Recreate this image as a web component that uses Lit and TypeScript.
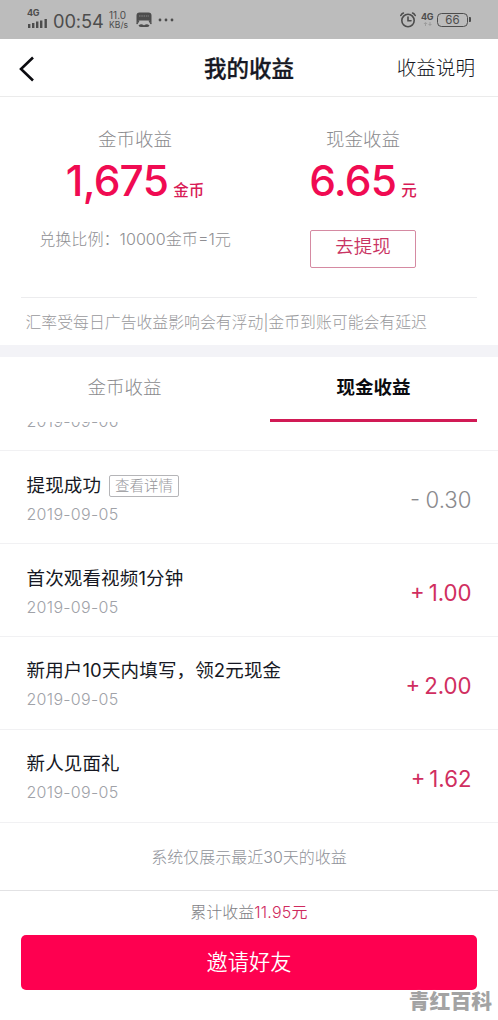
import { LitElement, html, css, nothing } from "lit";
import { customElement, property } from "lit/decorators.js";

interface Entry {
  title: string;
  date: string;
  amount: string;
  detail?: boolean;
}

const ENTRIES: Entry[] = [
  { title: "", date: "2019-09-06", amount: "" },
  { title: "提现成功", date: "2019-09-05", amount: "- 0.30", detail: true },
  { title: "首次观看视频1分钟", date: "2019-09-05", amount: "+ 1.00" },
  { title: "新用户10天内填写，领2元现金", date: "2019-09-05", amount: "+ 2.00" },
  { title: "新人见面礼", date: "2019-09-05", amount: "+ 1.62" },
];

@customElement("status-bar")
class StatusBar extends LitElement {
  static styles = css`
    :host {
      display: flex;
      box-sizing: border-box;
      height: 39px;
      flex: none;
      padding: 0 27px 0 27px;
      background: #bcbcbc;
      color: #4d4d4d;
      align-items: center;
    }
    svg { display: block; flex: none; }
    .signal { display: flex; flex-direction: column; width: 22px; gap: 2px; margin-top: -2px; }
    .gen { font-size: 9px; line-height: 8px; font-weight: 700; letter-spacing: -0.3px; }
    .time { font-size: 18.3px; line-height: 24px; margin: 2px 0 0 4px; width: 51px; letter-spacing: -0.1px; white-space: nowrap; }
    .speed { display: flex; flex-direction: column; font-size: 8.6px; line-height: 10px; margin: 1px 0 0 5px; width: 21px; white-space: nowrap; }
    .speed .val { font-size: 10px; }
    .app { margin-left: 6px; }
    .dots { margin-left: 6px; }
    .grow { flex: 1; }
    .net { display: flex; flex-direction: column; margin: 0 0 0 5px; width: 12px; gap: 1px; }
    .battery { margin: 0 0 0 4px; display: flex; align-items: center; gap: 1px; }
    .cell { box-sizing: border-box; width: 31px; height: 14px; border: 1.4px solid #4d4d4d; border-radius: 4.5px; font-size: 11.5px; line-height: 12px; text-align: center; }
    .tip { width: 2px; height: 5px; background: #4d4d4d; border-radius: 0 1px 1px 0; }
  `;
  render() {
    return html`
      <div class="signal">
        <span class="gen">4G</span>
        <svg width="22" height="9" viewBox="0 0 22 9" fill="#4d4d4d">
          <rect x="1" y="5" width="2.4" height="4" /><rect x="5" y="4" width="2.4" height="5" />
          <rect x="9" y="2.5" width="2.4" height="6.5" /><rect x="13" y="1.5" width="2.4" height="7.5" />
          <rect x="17.5" y="0" width="2.4" height="9" />
        </svg>
      </div>
      <span class="time">00:54</span>
      <div class="speed"><span class="val">11.0</span><span>KB/s</span></div>
      <svg class="app" width="16" height="16" viewBox="0 0 16 16">
        <path d="M3.500 .5H12.500Q15.500 .5 15.500 3.500V12.500L13.500 8.500H2.500L.5 12.500V3.500Q.5 .5 3.500 .5Z" fill="#4d4d4d" />
        <path d="M3 4H13" stroke="#888" stroke-width="1" stroke-dasharray="1.5 .8" />
        <path d="M1 12L3 8.500M15 12L13 8.500" stroke="#4d4d4d" stroke-width="1.2" fill="none" />
        <path d="M2.500 13.500Q5 11.500 7.500 13Q8 13.500 8.500 13Q11 11.500 13.500 13.500Q12.500 15.500 10 15H6Q3.500 15.500 2.500 13.500Z" fill="#4d4d4d" />
      </svg>
      <svg class="dots" width="16" height="4" viewBox="0 0 16 4" fill="#4d4d4d">
        <circle cx="2" cy="2" r="1.4" /><circle cx="8" cy="2" r="1.4" /><circle cx="14" cy="2" r="1.4" />
      </svg>
      <span class="grow"></span>
      <svg width="16" height="16" viewBox="0 0 16 16" fill="none" stroke="#4d4d4d" stroke-width="1.6" stroke-linecap="round">
        <circle cx="8" cy="8.500" r="6.200" /><path d="M8 5V8.800H11" /><path d="M.8 3.500Q1.800 1.600 3.400 1M15.200 3.500Q14.200 1.600 12.600 1" />
      </svg>
      <div class="net">
        <span class="gen">4G</span>
        <svg width="12" height="5" viewBox="0 0 12 5" fill="#9c9c9c"><path d="M2.500 2L4.500 0L6.500 2H5V4H4V2ZM7 2H8.500V0H9.500V2H11L9 4Z" /></svg>
      </div>
      <div class="battery"><span class="cell">66</span><span class="tip"></span></div>
    `;
  }
}

@customElement("entry-row")
class EntryRow extends LitElement {
  @property({ attribute: false }) entry!: Entry;
  static styles = css`
    :host {
      display: flex;
      box-sizing: border-box;
      height: 92.8px;
      flex: none;
      padding: 0 26.500px 0 26.500px;
      border-bottom: 1px solid #f1f1f3;
      align-items: center;
      justify-content: space-between;
    }
    .info { display: flex; flex-direction: column; padding-top: 1px; }
    .line { display: flex; align-items: center; height: 28px; gap: 8px; }
    .title { font-size: 18.5px; letter-spacing: 0.15px; color: #161823; white-space: nowrap; }
    .tag { box-sizing: border-box; height: 22px; width: 70px; border: 1px solid #b5b5b8; border-radius: 2px; font-size: 14.5px; line-height: 19px; text-align: center; color: #96969a; font-weight: 300; margin-top: 4px; }
    .date { font-size: 16px; line-height: 24px; letter-spacing: 0.3px; margin-top: 4px; color: #a0a2a8; font-weight: 300; white-space: nowrap; }
    .amount { font-size: 22.2px; line-height: 30px; margin-top: 6px; color: #d02e60; font-weight: 400; white-space: nowrap; word-spacing: -2.2px; font-feature-settings: "case"; }
    .minus { color: #8a8a8d; font-weight: 300; word-spacing: -0.8px; }
  `;
  render() {
    const e = this.entry;
    return html`
      <div class="info">
        <div class="line">
          <span class="title">${e.title}</span>
          ${e.detail ? html`<span class="tag">查看详情</span>` : nothing}
        </div>
        <span class="date">${e.date}</span>
      </div>
      <span class="amount ${e.amount.startsWith("-") ? "minus" : ""}">${e.amount}</span>
    `;
  }
}

@customElement("app-root")
class AppRoot extends LitElement {
  static styles = css`
    :host {
      display: flex;
      flex-direction: column;
      position: relative;
      width: 498px;
      height: 1020px;
      overflow: hidden;
      background: #fff;
      color: #161823;
      font-family: Inter, "Noto Sans CJK SC", sans-serif;
    }
    .header { display: grid; grid-template-columns: 1fr auto 1fr; align-items: center; box-sizing: border-box; height: 58px; flex: none; padding: 0 23px 0 19px; border-bottom: 1px solid #ebebeb; }
    .back { display: block; margin-top: 2px; }
    .heading { font-size: 22.5px; line-height: 32px; font-weight: 500; -webkit-text-stroke: 0.3px #161823; padding: 2px 0 0 4px; }
    .help { justify-self: end; font-size: 19.6px; line-height: 30px; font-weight: 300; color: #161823; margin-top: 0; }
    .summary { display: grid; grid-template-columns: 1fr 1fr; height: 201px; flex: none; margin: 0 21px; box-sizing: border-box; border-bottom: 1px solid #ececee; }
    .stat { display: flex; flex-direction: column; align-items: center; padding-top: 28px; }
    .label { font-size: 18.5px; line-height: 28px; color: #8a8a8d; font-weight: 300; }
    .value { display: flex; align-items: baseline; gap: 5px; height: 58px; line-height: 56px; color: #f00b52; font-weight: 500; font-size: 42.5px; letter-spacing: -0.8px; white-space: nowrap; }
    .unit { font-size: 15.5px; letter-spacing: 0; font-weight: 500; color: #d81b56; }
    .ratio { font-size: 16.1px; line-height: 24px; margin-top: 16px; color: #8f8f93; font-weight: 300; white-space: nowrap; }
    .withdraw { box-sizing: border-box; width: 106px; height: 38px; margin-top: 19px; border: 1px solid #d58aa2; border-radius: 2px; font-size: 18.5px; line-height: 31px; text-align: center; color: #c93463; font-weight: 350; }
    .note { height: 47px; line-height: 50px; flex: none; padding-left: 25.500px; font-size: 15.86px; color: #99999c; font-weight: 300; white-space: nowrap; }
    .band { height: 12px; flex: none; background: #f3f3f7; }
    .tabs { display: grid; grid-template-columns: 1fr 1fr; column-gap: 42px; height: 65px; flex: none; padding: 0 21px; }
    .tab { box-sizing: border-box; text-align: center; font-size: 18.5px; line-height: 61px; font-weight: 300; color: #8a8a8d; }
    .active { color: #0b0b10; font-weight: 700; border-bottom: 3px solid #d11a55; }
    .list { display: flex; flex-direction: column; justify-content: flex-end; height: 400.5px; flex: none; overflow: hidden; }
    .tip { height: 67.5px; line-height: 68px; flex: none; text-align: center; font-size: 16px; font-weight: 300; color: #8f9299; }
    .footer { display: flex; flex-direction: column; height: 130px; box-sizing: border-box; flex: none; padding: 0 21px; border-top: 1px solid #e2e2e4; }
    .total { height: 44px; line-height: 42px; text-align: center; font-size: 16px; font-weight: 300; color: #808084; }
    .sum { color: #cf2a5e; font-weight: 350; letter-spacing: 0.2px; }
    .invite { height: 55px; line-height: 55px; border-radius: 5px; background: #fe0050; color: #fff; text-align: center; font-size: 21.2px; font-weight: 350; }
    .mark { position: absolute; right: 6px; bottom: 2px; font-size: 20.800px; line-height: 32px; font-weight: 900; color: #a3a3a3; text-shadow: 0 0 2px #fff; }
  `;
  render() {
    return html`
      <status-bar></status-bar>
      <div class="header">
        <svg class="back" width="16" height="26" viewBox="0 0 16 26" fill="none" stroke="#0b0b10" stroke-width="2.6"><path d="M14 1.500L2 13L14 24.500" /></svg>
        <span class="heading">我的收益</span>
        <span class="help">收益说明</span>
      </div>
      <div class="summary">
        <div class="stat">
          <span class="label">金币收益</span>
          <div class="value">1,675<span class="unit">金币</span></div>
          <span class="ratio">兑换比例：10000金币=1元</span>
        </div>
        <div class="stat">
          <span class="label">现金收益</span>
          <div class="value">6.65<span class="unit">元</span></div>
          <div class="withdraw">去提现</div>
        </div>
      </div>
      <div class="note">汇率受每日广告收益影响会有浮动|金币到账可能会有延迟</div>
      <div class="band"></div>
      <div class="tabs">
        <span class="tab">金币收益</span>
        <span class="tab active">现金收益</span>
      </div>
      <div class="list">${ENTRIES.map((e) => html`<entry-row .entry=${e}></entry-row>`)}</div>
      <div class="tip">系统仅展示最近30天的收益</div>
      <div class="footer">
        <div class="total">累计收益<span class="sum">11.95元</span></div>
        <div class="invite">邀请好友</div>
      </div>
      <span class="mark">青红百科</span>
    `;
  }
}
